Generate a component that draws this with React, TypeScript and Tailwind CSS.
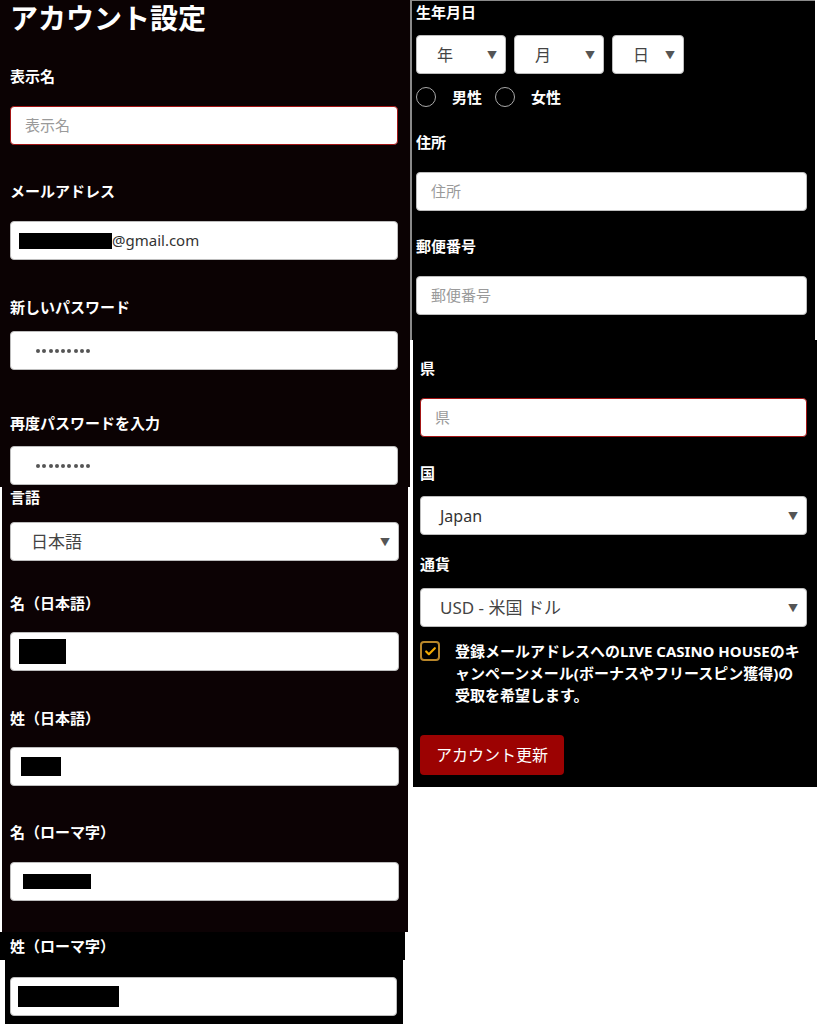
import { Check } from "lucide-react";

const font = "font-['Noto_Sans','Noto_Sans_CJK_JP',sans-serif]";

function Label({ text, className = "" }: { text: string; className?: string }) {
  return (
    <div className={`h-5 flex items-center text-[15px] leading-5 font-bold text-white ${className}`}>
      {text}
    </div>
  );
}

function Field({
  className = "",
  red = false,
  children,
}: {
  className?: string;
  red?: boolean;
  children?: React.ReactNode;
}) {
  return (
    <div
      className={`h-[39px] rounded-[4px] bg-white flex items-center border ${
        red ? "border-[#a31515]" : "border-[#bdbdbd]"
      } ${className}`}
    >
      {children}
    </div>
  );
}

function Placeholder({ text }: { text: string }) {
  return <span className="pl-[14px] text-[15px] text-[#9a9a9a]">{text}</span>;
}

function Redact({ w, h, ml = 8 }: { w: number; h: number; ml?: number }) {
  return <span className="bg-black block shrink-0" style={{ width: w, height: h, marginLeft: ml }} />;
}

function Arrow() {
  return <span className="text-[10px] text-[#555] leading-none">▼</span>;
}

function Dots() {
  return (
    <span className="pl-[25px] flex gap-[2.3px]">
      {Array.from({ length: 9 }).map((_, i) => (
        <span key={i} className="w-1 h-1 rounded-full bg-[#555]" />
      ))}
    </span>
  );
}

export default function App() {
  return (
    <div className={`w-[817px] h-[1024px] bg-white flex ${font}`}>
      {/* left column */}
      <div className="w-[410px] flex flex-col">
        <div className="h-[487px] bg-[#0b0203] pl-[10px] pr-[12px]">
          <div className="h-9 text-[28px] leading-9 font-bold text-white">アカウント設定</div>
          <Label text="表示名" className="mt-[30px]" />
          <Field red className="mt-5">
            <Placeholder text="表示名" />
          </Field>
          <Label text="メールアドレス" className="mt-9" />
          <Field className="mt-5">
            <Redact w={93} h={16} />
            <span className="text-[15px] text-[#333]">@gmail.com</span>
          </Field>
          <Label text="新しいパスワード" className="mt-[37px]" />
          <Field className="mt-[14px]">
            <Dots />
          </Field>
          <Label text="再度パスワードを入力" className="mt-[43px]" />
          <Field className="mt-[13px]">
            <Dots />
          </Field>
        </div>

        <div className="h-[445px] w-[406px] ml-[2px] bg-[#0c0204] pl-[8px] pr-[9px]">
          <Label text="言語" />
          <Field className="mt-[15px] justify-between pr-2">
            <span className="pl-[20px] text-[17px] text-[#444]">日本語</span>
            <Arrow />
          </Field>
          <Label text="名（日本語）" className="mt-8" />
          <Field className="mt-[19px]">
            <Redact w={47} h={25} />
          </Field>
          <Label text="姓（日本語）" className="mt-[37px]" />
          <Field className="mt-[19px]">
            <Redact w={40} h={19} ml={10} />
          </Field>
          <Label text="名（ローマ字）" className="mt-9" />
          <Field className="mt-5">
            <Redact w={68} h={15} ml={12} />
          </Field>
        </div>

        <div className="h-[28px] w-[405px] bg-black pl-[10px] flex items-center">
          <Label text="姓（ローマ字）" />
        </div>

        <div className="h-[64px] w-[398px] ml-[5px] bg-black pl-[5px] pr-[6px] pt-[17px]">
          <Field>
            <Redact w={101} h={21} ml={7} />
          </Field>
        </div>
      </div>

      {/* right column */}
      <div className="flex-1 flex flex-col">
        <div className="h-[340px] w-[405px] bg-black border-l-2 border-t border-[#8a8a8a] pl-[4px] pr-[8px]">
          <Label text="生年月日" className="mt-[1px]" />
          <div className="mt-[13px] flex gap-2">
            <Field className="w-[90px] justify-between pl-[20px] pr-[8px]">
              <span className="text-[16px] text-[#444]">年</span>
              <Arrow />
            </Field>
            <Field className="w-[90px] justify-between pl-[20px] pr-[8px]">
              <span className="text-[16px] text-[#444]">月</span>
              <Arrow />
            </Field>
            <Field className="w-[72px] justify-between pl-[20px] pr-[8px]">
              <span className="text-[16px] text-[#444]">日</span>
              <Arrow />
            </Field>
          </div>
          <div className="mt-[13px] h-5 flex items-center">
            <span className="w-5 h-5 rounded-full border border-[#aaa]" />
            <span className="ml-4 text-[15px] font-bold text-white">男性</span>
            <span className="ml-[13px] w-5 h-5 rounded-full border border-[#aaa]" />
            <span className="ml-4 text-[15px] font-bold text-white">女性</span>
          </div>
          <Label text="住所" className="mt-[25px]" />
          <Field className="mt-5">
            <Placeholder text="住所" />
          </Field>
          <Label text="郵便番号" className="mt-[25px]" />
          <Field className="mt-5 h-[38px]">
            <Placeholder text="郵便番号" />
          </Field>
        </div>

        <div className="h-[447px] w-[404px] ml-[3px] bg-black pl-[7px] pr-[10px]">
          <Label text="県" className="mt-[18px]" />
          <Field red className="mt-5 h-[38px]">
            <Placeholder text="県" />
          </Field>
          <Label text="国" className="mt-[26px]" />
          <Field className="mt-[13px] justify-between pr-2">
            <span className="pl-[19px] text-[16px] text-[#333]">Japan</span>
            <Arrow />
          </Field>
          <Label text="通貨" className="mt-[19px]" />
          <Field className="mt-[14px] justify-between pr-2">
            <span className="pl-[19px] text-[17px] text-[#444]">USD - 米国 ドル</span>
            <Arrow />
          </Field>
          <div className="mt-[13px] flex">
            <span className="w-5 h-5 mt-[1px] shrink-0 rounded-[4px] border-2 border-[#b8862a] flex items-center justify-center">
              <Check size={13} strokeWidth={4} className="text-[#f2a900]" />
            </span>
            <div className="ml-[15px] text-[15px] leading-[22px] font-bold text-white whitespace-nowrap">
              登録メールアドレスへのLIVE CASINO HOUSEのキ
              <br />
              ャンペーンメール(ボーナスやフリースピン獲得)の
              <br />
              受取を希望します。
            </div>
          </div>
          <button className="mt-[29px] h-10 px-[16px] rounded-[4px] bg-[#9c0202] text-white text-[16px]">
            アカウント更新
          </button>
        </div>
      </div>
    </div>
  );
}
